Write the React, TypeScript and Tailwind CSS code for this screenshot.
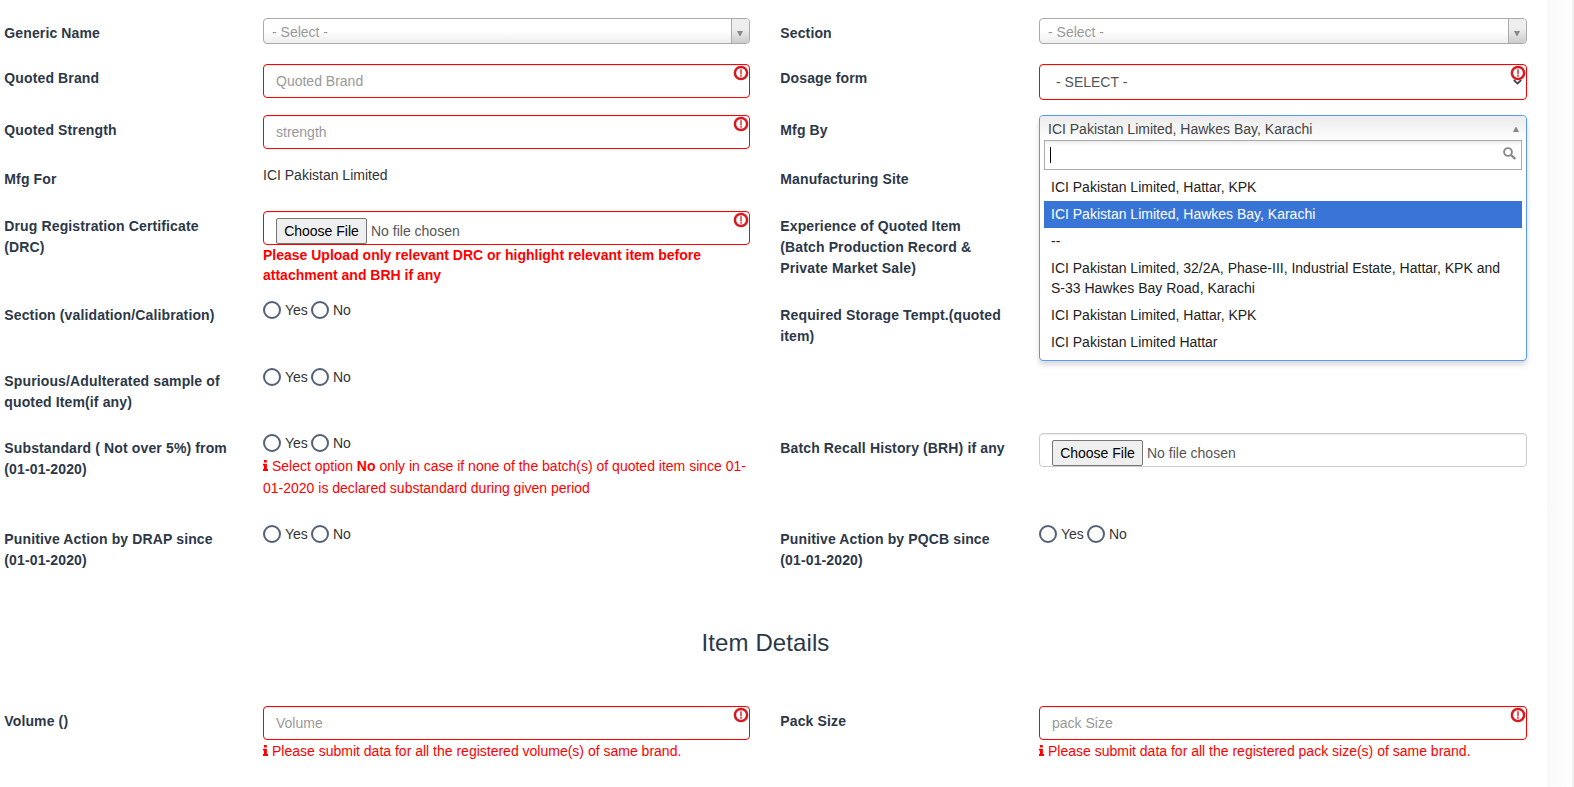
import React from "react";

function Label({ children }: { children: React.ReactNode }) {
  return (
    <label className="block pt-[8px] pr-[32px] pl-[0.3px] text-[14px] leading-[21px] font-bold tracking-[0.13px] text-[#2c3848]">
      {children}
    </label>
  );
}

function Row({ height, children }: { height: string; children: React.ReactNode }) {
  return <div className={"grid grid-cols-[259px_517px_259px_518px] " + height}>{children}</div>;
}

function Cell({ pad, children }: { pad: string; children?: React.ReactNode }) {
  return <div className={"mr-[30px] min-w-0 " + pad}>{children}</div>;
}

function AlertIcon({ place }: { place: string }) {
  return (
    <svg className={"pointer-events-none absolute h-[16px] w-[16px] " + place} viewBox="0 0 16 16">
      <circle cx="8" cy="8" r="6.1" fill="#fff" stroke="#d61a20" strokeWidth="2.5" />
      <path d="M8 4.2V9.4" stroke="#e0454a" strokeWidth="1.7" />
      <path d="M8 10V11.7" stroke="#e0454a" strokeWidth="1.7" />
    </svg>
  );
}

function InfoIcon() {
  return (
    <svg className="mr-[4px] inline-block h-[11px] w-[5px] align-[0.5px]" viewBox="0 0 5 11">
      <path d="M0.9 0H3.8V2.6H0.9ZM0 3.7H3.9V9.1H5V11H0V9.1H0.9V5.6H0Z" fill="#f00" />
    </svg>
  );
}

function RequiredInput({ placeholder }: { placeholder: string }) {
  return (
    <div className="relative">
      <input
        type="text"
        placeholder={placeholder}
        className="block h-[34px] w-full rounded-[4px] border border-[#f00] bg-white px-3 text-[14px] text-[#555] shadow-[inset_0_1px_1px_rgba(0,0,0,0.075)] outline-none placeholder:text-[#999]"
      />
      <AlertIcon place="top-px right-px" />
    </div>
  );
}

function FileInput({ required }: { required?: boolean }) {
  return (
    <div
      className={
        "relative flex h-[34px] items-start rounded-[4px] border pt-[6px] pl-3 text-[14px] text-[#555] shadow-[inset_0_1px_1px_rgba(0,0,0,0.075)] " +
        (required ? "border-[#f00]" : "border-[#ccc]")
      }
    >
      <button className="h-[26px] w-[91px] shrink-0 rounded-[2px] border border-[#767676] bg-[#efefef] text-center leading-[24px] whitespace-nowrap text-black">
        Choose File
      </button>
      <span className="ml-[4px] leading-[26px]">No file chosen</span>
      {required && <AlertIcon place="top-0 right-0" />}
    </div>
  );
}

function ChosenSelect() {
  return (
    <div className="flex h-[26px] overflow-hidden rounded-[4px] border border-[#aaa] bg-[linear-gradient(#fff_50%,#eee_100%)]">
      <span className="flex-1 pl-[8px] text-[14px] leading-[26px] text-[#999]">- Select -</span>
      <span className="flex w-[18px] items-center justify-center border-l border-[#aaa] bg-[linear-gradient(#eee_40%,#ccc_100%)]">
        <svg className="mt-[5px] mr-px h-[5px] w-[6px]" viewBox="0 0 6 5">
          <path d="M0 0H6L3.4 5H2.6Z" fill="#888" />
        </svg>
      </span>
    </div>
  );
}

function YesNo() {
  return (
    <div className="flex h-[18px] items-center text-[14px] leading-[18px] text-[#333]">
      <span className="h-[18px] w-[18px] rounded-full border-2 border-[#536075]" />
      <span className="ml-[4px] w-[26px]">Yes</span>
      <span className="h-[18px] w-[18px] rounded-full border-2 border-[#536075]" />
      <span className="ml-[4px]">No</span>
    </div>
  );
}

const sites = [
  "ICI Pakistan Limited, Hattar, KPK",
  "ICI Pakistan Limited, Hawkes Bay, Karachi",
  "--",
  "ICI Pakistan Limited, 32/2A, Phase-III, Industrial Estate, Hattar, KPK and S-33 Hawkes Bay Road, Karachi",
  "ICI Pakistan Limited, Hattar, KPK",
  "ICI Pakistan Limited Hattar",
];

function ManufacturerMenu() {
  return (
    <div className="relative z-10 h-[25px]">
      <div className="absolute inset-x-0 top-0 rounded-[4px] border border-[#5897fb] bg-white text-[14px] shadow-[0_4px_5px_rgba(0,0,0,0.15)]">
        <div className="flex h-[24px] items-center justify-between rounded-t-[4px] bg-[linear-gradient(#eee_20%,#fff_100%)] pr-[7px] pl-[8px] text-[#444]">
          <span className="pt-[2px] leading-[24px]">ICI Pakistan Limited, Hawkes Bay, Karachi</span>
          <svg className="mt-[3px] h-[5px] w-[6px]" viewBox="0 0 6 5">
            <path d="M0 5H6L3.4 0H2.6Z" fill="#888" />
          </svg>
        </div>
        <div className="mx-[4px] flex h-[30px] justify-between border border-[#aaa] bg-[linear-gradient(#eee_1%,#fff_15%)] pt-[6px] pr-[5px] pl-[5px]">
          <span className="h-[16px] w-px bg-black" />
          <svg className="h-[13px] w-[13px]" viewBox="0 0 13 13" fill="none" stroke="#888">
            <circle cx="5" cy="5" r="3.9" strokeWidth="1.9" />
            <path d="M8 8L12.2 12" strokeWidth="2.4" />
          </svg>
        </div>
        <ul className="mx-[4px] pt-[4px] pb-[4px] text-[#222]">
          {sites.map((site, i) => (
            <li
              key={i}
              className={
                "px-[7px] pt-[3px] pb-[4px] leading-[20px] " + (i === 1 ? "bg-[#3875d7] text-white" : "")
              }
            >
              {site}
            </li>
          ))}
        </ul>
      </div>
    </div>
  );
}

export default function App() {
  return (
    <div className="flex h-[787px] w-[1574px] overflow-hidden bg-white font-['Liberation_Sans',Arial,sans-serif] text-[#333]">
      <div className="w-[1547px] shrink-0 pt-[15px] pl-[4px]">
        <Row height="h-[45px]">
          <Label>Generic Name</Label>
          <Cell pad="pt-[3px]">
            <ChosenSelect />
          </Cell>
          <Label>Section</Label>
          <Cell pad="pt-[3px]">
            <ChosenSelect />
          </Cell>
        </Row>
        <Row height="h-[52px]">
          <Label>Quoted Brand</Label>
          <Cell pad="pt-[4px]">
            <RequiredInput placeholder="Quoted Brand" />
          </Cell>
          <Label>Dosage form</Label>
          <Cell pad="pt-[4px]">
            <div className="relative flex h-[36px] items-center justify-between rounded-[4px] border border-[#f00] pr-[4px] pl-[16px] text-[14px] text-[#555] shadow-[inset_0_1px_1px_rgba(0,0,0,0.075)]">
              <span>- SELECT -</span>
              <svg className="h-[6px] w-[9px]" viewBox="0 0 9 6" fill="none">
                <path d="M0.8 1L4.5 4.6L8.2 1" stroke="#444" strokeWidth="1.8" />
              </svg>
              <AlertIcon place="top-0 right-0" />
            </div>
          </Cell>
        </Row>
        <Row height="h-[49px]">
          <Label>Quoted Strength</Label>
          <Cell pad="pt-[3px]">
            <RequiredInput placeholder="strength" />
          </Cell>
          <Label>Mfg By</Label>
          <Cell pad="pt-[3px]">
            <ManufacturerMenu />
          </Cell>
        </Row>
        <Row height="h-[47px]">
          <Label>Mfg For</Label>
          <Cell pad="pt-[4px]">
            <span className="block text-[14px] leading-[20px]">ICI Pakistan Limited</span>
          </Cell>
          <Label>Manufacturing Site</Label>
          <Cell pad="pt-0" />
        </Row>
        <Row height="h-[89px]">
          <Label>Drug Registration Certificate (DRC)</Label>
          <Cell pad="pt-[3px]">
            <FileInput required />
            <p className="text-[14px] leading-[20px] font-bold text-[#f00]">
              Please Upload only relevant DRC or highlight relevant item before attachment and BRH if any
            </p>
          </Cell>
          <Label>Experience of Quoted Item (Batch Production Record &amp; Private Market Sale)</Label>
          <Cell pad="pt-0" />
        </Row>
        <Row height="h-[66px]">
          <Label>Section (validation/Calibration)</Label>
          <Cell pad="pt-[4px]">
            <YesNo />
          </Cell>
          <Label>Required Storage Tempt.(quoted item)</Label>
          <Cell pad="pt-0" />
        </Row>
        <Row height="h-[67px]">
          <Label>Spurious/Adulterated sample of quoted Item(if any)</Label>
          <Cell pad="pt-[5px]">
            <YesNo />
          </Cell>
        </Row>
        <Row height="h-[91px]">
          <Label>Substandard ( Not over 5%) from (01-01-2020)</Label>
          <Cell pad="pt-[4px]">
            <YesNo />
            <p className="mt-[3px] text-[14px] leading-[22px] text-[#f00]">
              <InfoIcon />
              Select option <b>No</b> only in case if none of the batch(s) of quoted item since 01-01-2020 is
              declared substandard during given period
            </p>
          </Cell>
          <Label>Batch Recall History (BRH) if any</Label>
          <Cell pad="pt-[3px]">
            <FileInput />
          </Cell>
        </Row>
        <Row height="h-[107px]">
          <Label>Punitive Action by DRAP since (01-01-2020)</Label>
          <Cell pad="pt-[4px]">
            <YesNo />
          </Cell>
          <Label>Punitive Action by PQCB since (01-01-2020)</Label>
          <Cell pad="pt-[4px]">
            <YesNo />
          </Cell>
        </Row>
        <h3 className="h-[75px] w-[1523px] text-center text-[24px] leading-[30px] tracking-[0.1px] text-[#2c3848]">
          Item Details
        </h3>
        <Row height="h-[84px]">
          <Label>Volume ()</Label>
          <Cell pad="pt-[3px]">
            <RequiredInput placeholder="Volume" />
            <p className="text-[14px] leading-[22px] text-[#f00]">
              <InfoIcon />
              Please submit data for all the registered volume(s) of same brand.
            </p>
          </Cell>
          <Label>Pack Size</Label>
          <Cell pad="pt-[3px]">
            <RequiredInput placeholder="pack Size" />
            <p className="text-[14px] leading-[22px] text-[#f00]">
              <InfoIcon />
              Please submit data for all the registered pack size(s) of same brand.
            </p>
          </Cell>
        </Row>
      </div>
      <div className="w-[25px] shrink-0 bg-[linear-gradient(to_right,#f9f9f9,#fefefe)]" />
      <div className="w-[2px] shrink-0 bg-[#f0f0f0]" />
    </div>
  );
}
